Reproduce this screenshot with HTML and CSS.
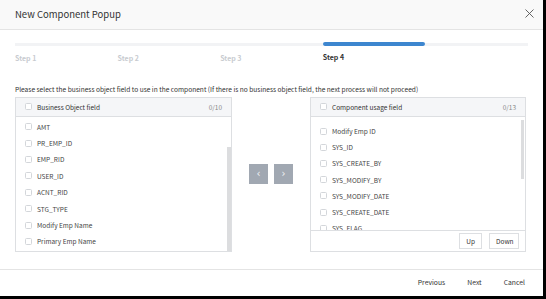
FILE: index.html
```html
<!DOCTYPE html>
<html>
<head>
    <meta charset="UTF-8">
    <title>New Component Popup</title>
    <link rel="stylesheet" href="styles.css">
</head>
<body>
    <div class="popup">
        <div class="popup-header">
            <span class="popup-title">New Component Popup</span>
            <svg class="close-icon" width="9" height="9" viewBox="0 0 9 9">
                <path d="M0.5 0.5 L8.5 8.5 M8.5 0.5 L0.5 8.5" stroke="#555" stroke-width="0.9" fill="none"/>
            </svg>
        </div>

        <div class="popup-body">
            <div class="steps">
                <div class="step"><div class="step-bar"></div><span>Step 1</span></div>
                <div class="step"><div class="step-bar"></div><span>Step 2</span></div>
                <div class="step"><div class="step-bar"></div><span>Step 3</span></div>
                <div class="step active"><div class="step-bar"></div><span>Step 4</span></div>
                <div class="step"><div class="step-bar"></div><span></span></div>
            </div>

            <p class="guide">Please select the business object field to use in the component (If there is no business object field, the next process will not proceed)</p>

            <div class="transfer">
                <div class="panel">
                    <div class="panel-head">
                        <span class="check"></span>
                        <span class="panel-name">Business Object field</span>
                        <span class="count">0/10</span>
                    </div>
                    <div class="panel-list left-list">
                        <div class="row"><span class="check"></span>AMT</div>
                        <div class="row"><span class="check"></span>PR_EMP_ID</div>
                        <div class="row"><span class="check"></span>EMP_RID</div>
                        <div class="row"><span class="check"></span>USER_ID</div>
                        <div class="row"><span class="check"></span>ACNT_RID</div>
                        <div class="row"><span class="check"></span>STG_TYPE</div>
                        <div class="row"><span class="check"></span>Modify Emp Name</div>
                        <div class="row"><span class="check"></span>Primary Emp Name</div>
                        <div class="thumb left-thumb"></div>
                    </div>
                </div>

                <div class="move-buttons">
                    <button class="move-btn">&#8249;</button>
                    <button class="move-btn">&#8250;</button>
                </div>

                <div class="panel">
                    <div class="panel-head">
                        <span class="check"></span>
                        <span class="panel-name">Component usage field</span>
                        <span class="count">0/13</span>
                    </div>
                    <div class="panel-list right-list">
                        <div class="row"><span class="check"></span>Modify Emp ID</div>
                        <div class="row"><span class="check"></span>SYS_ID</div>
                        <div class="row"><span class="check"></span>SYS_CREATE_BY</div>
                        <div class="row"><span class="check"></span>SYS_MODIFY_BY</div>
                        <div class="row"><span class="check"></span>SYS_MODIFY_DATE</div>
                        <div class="row"><span class="check"></span>SYS_CREATE_DATE</div>
                        <div class="row"><span class="check"></span>SYS_FLAG</div>
                        <div class="thumb right-thumb"></div>
                    </div>
                    <div class="panel-foot">
                        <button class="order-btn">Up</button>
                        <button class="order-btn">Down</button>
                    </div>
                </div>
            </div>
        </div>

        <div class="popup-footer">
            <button class="foot-btn">Previous</button>
            <button class="foot-btn">Next</button>
            <button class="foot-btn">Cancel</button>
        </div>
    </div>
</body>
</html>
```

FILE: styles.css
```css
* {
    margin: 0;
    padding: 0;
    box-sizing: border-box;
}

body {
    background-color: #000;
    font-family: "Noto Sans CJK KR", "Noto Sans", sans-serif;
    color: #333;
    width: 546px;
    height: 299px;
    overflow: hidden;
}

.popup {
    width: 543px;
    height: 296px;
    background-color: #fff;
    display: flex;
    flex-direction: column;
}

/* header */
.popup-header {
    height: 30px;
    flex-shrink: 0;
    background-color: #f9f9f9;
    border-bottom: 1px solid #e4e4e4;
    display: flex;
    align-items: center;
    justify-content: space-between;
    padding: 0 9px 2px 15px;
}

.popup-title {
    font-size: 9.5px;
    color: #333;
}

/* body */
.popup-body {
    flex: 1;
    padding: 12px 15px 0 15px;
}

.steps {
    display: grid;
    grid-template-columns: repeat(5, 1fr);
    width: 513px;
}

.step-bar {
    height: 3px;
    margin-top: 0.5px;
    background-color: #f2f3f5;
}

.step span {
    display: block;
    height: 16px;
    line-height: 16px;
    margin-top: 4px;
    font-size: 7px;
    font-weight: bold;
    color: #c8cbd0;
}

.step.active .step-bar {
    height: 4px;
    margin-top: 0;
    background-color: #3d86cf;
    border-radius: 2px;
}

.step.active span {
    color: #333;
    margin-top: 3px;
}

.guide {
    margin-top: 19px;
    font-size: 6.6px;
    line-height: 8px;
    color: #333;
    white-space: nowrap;
}

/* transfer panels */
.transfer {
    display: flex;
    margin-top: 4px;
    height: 155px;
}

.panel {
    border: 1px solid #dddfe2;
    display: flex;
    flex-direction: column;
}

.panel:first-child {
    width: 217px;
}

.panel:last-child {
    width: 216px;
}

.panel-head {
    height: 19px;
    flex-shrink: 0;
    background-color: #f5f6f8;
    border-bottom: 1px solid #dddfe2;
    display: flex;
    align-items: center;
    padding: 0 9px 0 9px;
    font-size: 6.5px;
    color: #333;
}

.panel-name {
    flex: 1;
}

.count {
    color: #888;
}

.check {
    width: 7px;
    height: 7px;
    border: 1px solid #d3d6da;
    border-radius: 1.5px;
    background-color: #fff;
    margin-right: 5px;
    flex-shrink: 0;
}

.panel-list {
    position: relative;
    flex: 1;
    overflow: hidden;
}

.left-list {
    padding-top: 2px;
}

.right-list {
    padding-top: 6.5px;
}

.row {
    height: 16.4px;
    display: flex;
    align-items: center;
    padding-left: 9px;
    font-size: 6.5px;
    color: #444;
}

.right-list .row {
    height: 16.2px;
}

.thumb {
    position: absolute;
    right: 0;
    width: 4px;
    background-color: #dcdddf;
}

.left-thumb {
    top: 30px;
    bottom: 0;
}

.right-thumb {
    top: 3px;
    height: 59px;
    right: 1px;
    width: 3px;
}

.panel-foot {
    height: 21px;
    flex-shrink: 0;
    border-top: 1px solid #dddfe2;
    display: flex;
    justify-content: flex-end;
    align-items: center;
    gap: 7px;
    padding-right: 6px;
}

.order-btn {
    height: 16px;
    border: 1px solid #dddfe2;
    background-color: #fff;
    font-family: inherit;
    font-size: 6.5px;
    color: #333;
    padding: 0 6px;
}

.order-btn:last-child {
    width: 30px;
}

.move-buttons {
    width: 78px;
    flex-shrink: 0;
    display: flex;
    justify-content: center;
    align-items: center;
    gap: 6px;
}

.move-btn {
    width: 19px;
    height: 20px;
    border: none;
    background-color: #a1a8b2;
    color: #f2f3f5;
    font-family: "DejaVu Sans", sans-serif;
    font-size: 10px;
    line-height: 20px;
}

/* footer */
.popup-footer {
    height: 27px;
    flex-shrink: 0;
    border-top: 1px solid #e4e4e4;
    display: flex;
    justify-content: flex-end;
    align-items: center;
    gap: 22px;
    padding: 0 18px 2px 0;
}

.foot-btn {
    border: none;
    background: none;
    font-family: inherit;
    font-size: 6.8px;
    color: #333;
}
```
